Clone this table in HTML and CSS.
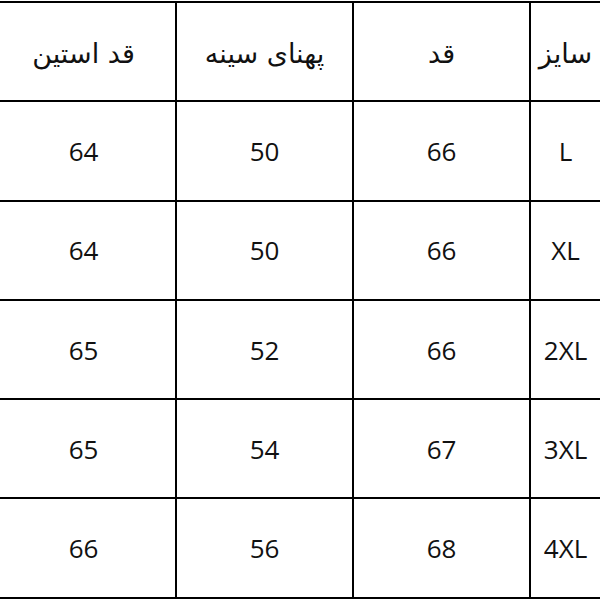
FILE: index.html
```html
<!DOCTYPE html>
<html lang="fa">
<head>
<meta charset="utf-8">
<link rel="stylesheet" href="styles.css">
</head>
<body>
<table class="size-table" dir="rtl">
  <colgroup>
    <col class="c-size">
    <col class="c-mid">
    <col class="c-mid">
    <col class="c-first">
  </colgroup>
  <tr class="head"><td>سایز</td><td>قد</td><td>پهنای سینه</td><td>قد استین</td></tr>
  <tr><td>L</td><td>66</td><td>50</td><td>64</td></tr>
  <tr><td>XL</td><td>66</td><td>50</td><td>64</td></tr>
  <tr><td>2XL</td><td>66</td><td>52</td><td>65</td></tr>
  <tr><td>3XL</td><td>67</td><td>54</td><td>65</td></tr>
  <tr><td>4XL</td><td>68</td><td>56</td><td>66</td></tr>
</table>
</body>
</html>
```
FILE: styles.css
```css
html, body {
  margin: 0;
  padding: 0;
  background: #fff;
  overflow: hidden;
}
body {
  width: 600px;
  height: 600px;
}
.size-table {
  border-collapse: collapse;
  table-layout: fixed;
  width: 620px;
  margin-left: -10px;
  margin-top: 1px;
  font-family: "Open Sans", "DejaVu Sans", sans-serif;
  font-size: 26px;
  color: #111;
}
.c-size { width: 81px; }
.c-mid { width: 177px; }
.c-first { width: 185px; }
.size-table td {
  border: 2px solid #000;
  height: 97.3px;
  padding: 0;
  text-align: center;
  vertical-align: middle;
}
.size-table tr.head td {
  font-family: "DejaVu Sans", sans-serif;
  font-size: 27px;
  height: 93.3px;
  padding-top: 4px;
}
.size-table td:first-child {
  padding-right: 10px;
}
```
